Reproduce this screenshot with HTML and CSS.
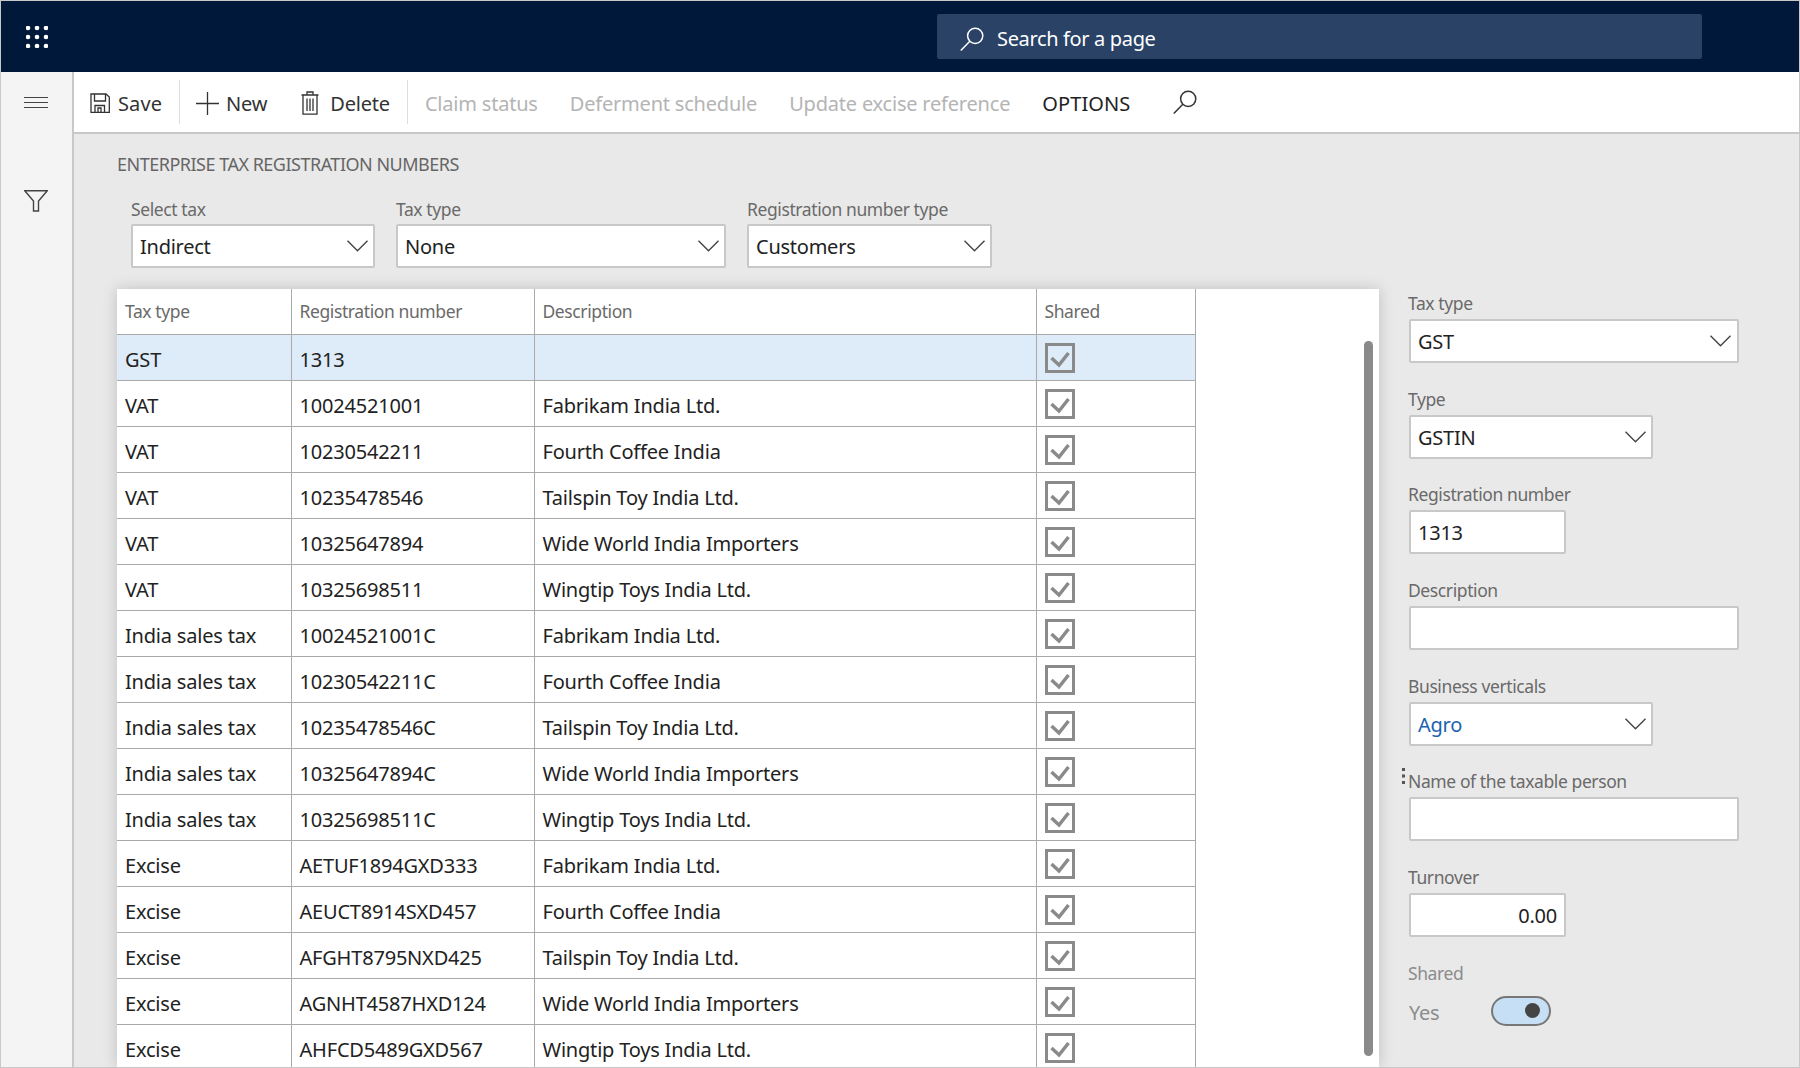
FILE: index.html
```html
<!DOCTYPE html>
<html lang="en">
<head>
  <meta charset="UTF-8" />
  <title>Enterprise tax registration numbers</title>
  <link rel="stylesheet" href="styles.css">
</head>
<body>
  <svg class="defs" width="0" height="0">
    <symbol id="chevron" viewBox="0 0 21 12">
      <path d="M0.5 0.8 L10.5 10.8 L20.5 0.8" fill="none" stroke="#444" stroke-width="1.4"/>
    </symbol>
    <symbol id="check" viewBox="0 0 30 30">
      <rect x="1.5" y="1.5" width="27" height="27" fill="none" stroke="#8a8a8a" stroke-width="3"/>
      <path d="M6.5 15 L14 22 L23.5 10" fill="none" stroke="#8a8a8a" stroke-width="3.5"/>
    </symbol>
    <symbol id="search" viewBox="0 0 24 24">
      <circle cx="15.2" cy="8.8" r="7.6" fill="none" stroke="currentColor" stroke-width="1.5"/>
      <path d="M9.8 14.2 L0.8 23.4" fill="none" stroke="currentColor" stroke-width="1.5"/>
    </symbol>
  </svg>

  <div class="app">
    <header class="topbar">
      <div class="waffle">
        <svg width="22" height="22" viewBox="0 0 22 22" fill="#fff">
          <circle cx="2" cy="2" r="2.3"/><circle cx="11" cy="2" r="2.3"/><circle cx="20" cy="2" r="2.3"/>
          <circle cx="2" cy="11" r="2.3"/><circle cx="11" cy="11" r="2.3"/><circle cx="20" cy="11" r="2.3"/>
          <circle cx="2" cy="20" r="2.3"/><circle cx="11" cy="20" r="2.3"/><circle cx="20" cy="20" r="2.3"/>
        </svg>
      </div>
      <div class="page-search">
        <svg class="page-search-icon" width="24" height="24"><use href="#search"/></svg>
        <span>Search for a page</span>
      </div>
    </header>

    <div class="body-row">
      <nav class="sidebar">
        <svg class="hamburger" width="24" height="12" viewBox="0 0 24 12" stroke="#444" stroke-width="1">
          <path d="M0 1.5 H24 M0 6.5 H24 M0 11.5 H24"/>
        </svg>
        <svg class="filter" width="24" height="22" viewBox="0 0 24 22" fill="none" stroke="#444" stroke-width="1.4">
          <path d="M0.8 0.8 H23.2 L14.5 11 V21 H9.5 V11 Z"/>
        </svg>
      </nav>

      <div class="main">
        <div class="toolbar">
          <div class="tool tool-save">
            <svg width="20" height="20" viewBox="0 0 20 20" fill="none" stroke="#333" stroke-width="1.3">
              <path d="M1 1 H16 L19.3 4 V19.3 H1 Z"/>
              <path d="M4.5 1 V8 H15.5 V1"/>
              <path d="M5 19.3 V12.5 H14.5 V19.3 M8 19 V15 H11 V19"/>
            </svg>
            <span>Save</span>
          </div>
          <div class="tool-sep"></div>
          <div class="tool tool-new">
            <svg width="23" height="23" viewBox="0 0 23 23" stroke="#333" stroke-width="1.3">
              <path d="M11.5 0 V23 M0 11.5 H23"/>
            </svg>
            <span>New</span>
          </div>
          <div class="tool tool-delete">
            <svg width="18" height="24" viewBox="0 0 18 24" fill="none" stroke="#333" stroke-width="1.3">
              <path d="M0.5 4 H17.5 M2 4 V23.2 H16 V4 M6 4 V1 H12 V4"/>
              <path d="M6 7.5 V20 M9 7.5 V20 M12 7.5 V20"/>
            </svg>
            <span>Delete</span>
          </div>
          <div class="tool-sep sep-second"></div>
          <div class="tool tool-off tool-claim"><span>Claim status</span></div>
          <div class="tool tool-off tool-defer"><span>Deferment schedule</span></div>
          <div class="tool tool-off tool-update"><span>Update excise reference</span></div>
          <div class="tool tool-options"><span>OPTIONS</span></div>
          <svg class="tool-search" width="24" height="24"><use href="#search"/></svg>
        </div>

        <div class="content">
          <section class="left">
            <h2 class="section-title">ENTERPRISE TAX REGISTRATION NUMBERS</h2>
            <div class="filters">
              <div class="filter-field w-tax">
                <label>Select tax</label>
                <div class="box"><span>Indirect</span><svg class="chev" width="21" height="12"><use href="#chevron"/></svg></div>
              </div>
              <div class="filter-field w-type">
                <label>Tax type</label>
                <div class="box"><span>None</span><svg class="chev" width="21" height="12"><use href="#chevron"/></svg></div>
              </div>
              <div class="filter-field w-reg">
                <label>Registration number type</label>
                <div class="box"><span>Customers</span><svg class="chev" width="21" height="12"><use href="#chevron"/></svg></div>
              </div>
            </div>

            <div class="grid-card">
              <table class="grid">
                <colgroup>
                  <col class="c-type"><col class="c-num"><col class="c-desc"><col class="c-shared">
                </colgroup>
                <thead>
                  <tr><th>Tax type</th><th>Registration number</th><th>Description</th><th>Shared</th></tr>
                </thead>
                <tbody>
                  <tr class="selected"><td>GST</td><td>1313</td><td></td><td><svg class="tick" width="30" height="30"><use href="#check"/></svg></td></tr>
                  <tr><td>VAT</td><td>10024521001</td><td>Fabrikam India Ltd.</td><td><svg class="tick" width="30" height="30"><use href="#check"/></svg></td></tr>
                  <tr><td>VAT</td><td>10230542211</td><td>Fourth Coffee India</td><td><svg class="tick" width="30" height="30"><use href="#check"/></svg></td></tr>
                  <tr><td>VAT</td><td>10235478546</td><td>Tailspin Toy India Ltd.</td><td><svg class="tick" width="30" height="30"><use href="#check"/></svg></td></tr>
                  <tr><td>VAT</td><td>10325647894</td><td>Wide World India Importers</td><td><svg class="tick" width="30" height="30"><use href="#check"/></svg></td></tr>
                  <tr><td>VAT</td><td>10325698511</td><td>Wingtip Toys India Ltd.</td><td><svg class="tick" width="30" height="30"><use href="#check"/></svg></td></tr>
                  <tr><td>India sales tax</td><td>10024521001C</td><td>Fabrikam India Ltd.</td><td><svg class="tick" width="30" height="30"><use href="#check"/></svg></td></tr>
                  <tr><td>India sales tax</td><td>10230542211C</td><td>Fourth Coffee India</td><td><svg class="tick" width="30" height="30"><use href="#check"/></svg></td></tr>
                  <tr><td>India sales tax</td><td>10235478546C</td><td>Tailspin Toy India Ltd.</td><td><svg class="tick" width="30" height="30"><use href="#check"/></svg></td></tr>
                  <tr><td>India sales tax</td><td>10325647894C</td><td>Wide World India Importers</td><td><svg class="tick" width="30" height="30"><use href="#check"/></svg></td></tr>
                  <tr><td>India sales tax</td><td>10325698511C</td><td>Wingtip Toys India Ltd.</td><td><svg class="tick" width="30" height="30"><use href="#check"/></svg></td></tr>
                  <tr><td>Excise</td><td>AETUF1894GXD333</td><td>Fabrikam India Ltd.</td><td><svg class="tick" width="30" height="30"><use href="#check"/></svg></td></tr>
                  <tr><td>Excise</td><td>AEUCT8914SXD457</td><td>Fourth Coffee India</td><td><svg class="tick" width="30" height="30"><use href="#check"/></svg></td></tr>
                  <tr><td>Excise</td><td>AFGHT8795NXD425</td><td>Tailspin Toy India Ltd.</td><td><svg class="tick" width="30" height="30"><use href="#check"/></svg></td></tr>
                  <tr><td>Excise</td><td>AGNHT4587HXD124</td><td>Wide World India Importers</td><td><svg class="tick" width="30" height="30"><use href="#check"/></svg></td></tr>
                  <tr><td>Excise</td><td>AHFCD5489GXD567</td><td>Wingtip Toys India Ltd.</td><td><svg class="tick" width="30" height="30"><use href="#check"/></svg></td></tr>
                </tbody>
              </table>
              <div class="scrollbar"></div>
            </div>
          </section>

          <aside class="details">
            <div class="field">
              <label>Tax type</label>
              <div class="box box-wide"><span>GST</span><svg class="chev" width="21" height="12"><use href="#chevron"/></svg></div>
            </div>
            <div class="field">
              <label>Type</label>
              <div class="box box-mid"><span>GSTIN</span><svg class="chev" width="21" height="12"><use href="#chevron"/></svg></div>
            </div>
            <div class="field">
              <label>Registration number</label>
              <div class="box box-small"><span>1313</span></div>
            </div>
            <div class="field">
              <label>Description</label>
              <div class="box box-wide"></div>
            </div>
            <div class="field">
              <label>Business verticals</label>
              <div class="box box-mid"><span class="link">Agro</span><svg class="chev" width="21" height="12"><use href="#chevron"/></svg></div>
            </div>
            <div class="field">
              <svg class="grip" width="3" height="16" viewBox="0 0 3 16" fill="#555">
                <rect y="0" width="3" height="3"/><rect y="6.5" width="3" height="3"/><rect y="13" width="3" height="3"/>
              </svg>
              <label>Name of the taxable person</label>
              <div class="box box-wide"></div>
            </div>
            <div class="field">
              <label>Turnover</label>
              <div class="box box-small box-right"><span>0.00</span></div>
            </div>
            <div class="field">
              <label class="muted">Shared</label>
              <div class="toggle-row">
                <span class="muted">Yes</span>
                <div class="toggle"><div class="knob"></div></div>
              </div>
            </div>
          </aside>
        </div>
      </div>
    </div>
  </div>
</body>
</html>
```

FILE: styles.css
```css
* {
  box-sizing: border-box;
}

body {
  margin: 0;
  background: #fff;
  font-family: "Noto Sans", "Open Sans", sans-serif;
  color: #222;
}

.defs {
  display: block;
  height: 0;
}

.app {
  width: 1800px;
  height: 1068px;
  border: 1px solid #c8c8c8;
  display: flex;
  flex-direction: column;
  overflow: hidden;
}

/* top bar */
.topbar {
  height: 71px;
  flex: none;
  background: #00183a;
  display: flex;
  align-items: center;
}

.waffle {
  width: 71px;
  display: flex;
  justify-content: center;
}

.page-search {
  width: 765px;
  height: 45px;
  margin-left: 865px;
  background: #294266;
  border-radius: 2px;
  color: #fff;
  display: flex;
  align-items: center;
  padding: 4px 0 0 23px;
  font-size: 20px;
  letter-spacing: -0.35px;
}

.page-search-icon {
  margin-right: 13px;
}

.body-row {
  flex: 1;
  display: flex;
  min-height: 0;
}

/* left rail */
.sidebar {
  width: 73px;
  flex: none;
  background: #f4f4f4;
  border-right: 2px solid #c8c8c8;
  display: flex;
  flex-direction: column;
  align-items: center;
  padding-right: 2px;
}

.hamburger {
  margin-top: 24px;
}

.filter {
  margin-top: 82px;
}

.main {
  flex: 1;
  display: flex;
  flex-direction: column;
  min-width: 0;
  background: #e9e9e9;
}

/* action pane */
.toolbar {
  height: 62px;
  flex: none;
  background: #fff;
  border-bottom: 2px solid #c8c8c8;
  display: flex;
  align-items: center;
  font-size: 20px;
  letter-spacing: -0.2px;
}

.tool {
  display: flex;
  align-items: center;
  color: #333;
}

.tool span {
  line-height: 28px;
  margin-top: 4px;
}

.tool svg {
  margin-top: 2px;
}

.tool-save {
  margin-left: 16px;
}

.tool-save span {
  margin-left: 8px;
  letter-spacing: 0.1px;
}

.tool-sep {
  width: 1px;
  height: 44px;
  background: #ddd;
  margin-left: 17px;
}

.tool-new {
  margin-left: 16px;
}

.tool-new span {
  margin-left: 7px;
}

.tool-delete {
  margin-left: 34px;
}

.tool-delete span {
  margin-left: 11px;
}

.sep-second {
  margin-left: 17px;
}

.tool-off {
  color: #b4b4b4;
}

.tool-claim {
  margin-left: 17px;
}

.tool-defer {
  margin-left: 32px;
}

.tool-update {
  margin-left: 32px;
}

.tool-options {
  margin-left: 32px;
  color: #222;
  letter-spacing: 0.1px;
}

.tool-search {
  margin-left: 43px;
  color: #333;
}

/* page body */
.content {
  flex: 1;
  display: flex;
  min-height: 0;
}

.left {
  width: 1305px;
  flex: none;
  padding-left: 43px;
  display: flex;
  flex-direction: column;
  min-height: 0;
}

.section-title {
  margin: 18px 0 0;
  font-size: 18px;
  line-height: 24px;
  font-weight: 400;
  color: #666;
  letter-spacing: -0.5px;
}

.filters {
  display: flex;
  margin-top: 21px;
  margin-left: 14px;
}

.filter-field label {
  display: block;
}

.w-tax {
  width: 244px;
  margin-right: 21px;
}

.w-type {
  width: 330px;
  margin-right: 21px;
}

.w-reg {
  width: 245px;
}

label {
  font-size: 17.5px;
  line-height: 24px;
  color: #6a6a6a;
  letter-spacing: -0.4px;
}

.box {
  height: 44px;
  margin-top: 3px;
  background: #fff;
  border: 2px solid #c8c8c8;
  border-radius: 2px;
  display: flex;
  align-items: center;
  justify-content: space-between;
  padding: 1px 5px 0 7px;
  font-size: 20px;
  letter-spacing: -0.25px;
  color: #222;
}

.chev {
  margin-top: -1px;
  flex: none;
}

/* grid */
.grid-card {
  flex: 1;
  min-height: 0;
  margin-top: 21px;
  background: #fff;
  box-shadow: 0 0 14px rgba(0, 0, 0, 0.18);
  position: relative;
  overflow: hidden;
}

.grid {
  border-collapse: collapse;
  table-layout: fixed;
  width: 1078px;
  font-size: 20px;
  letter-spacing: -0.2px;
}

.c-type {
  width: 174px;
}

.c-num {
  width: 243px;
}

.c-desc {
  width: 502px;
}

.c-shared {
  width: 159px;
}

.grid th {
  height: 45px;
  padding: 0 8px;
  text-align: left;
  font-size: 17.5px;
  font-weight: 400;
  color: #6a6a6a;
  letter-spacing: -0.4px;
  border-right: 1px solid #aaa;
  border-bottom: 1px solid #aaa;
}

.grid td {
  height: 46px;
  padding: 5px 8px 0;
  color: #222;
  border-right: 1px solid #aaa;
  border-bottom: 1px solid #aaa;
  white-space: nowrap;
}

.grid tr.selected td {
  background: #deebf8;
}

.tick {
  display: block;
  margin-top: -3px;
}

.scrollbar {
  position: absolute;
  left: 1247px;
  top: 52px;
  width: 9px;
  height: 715px;
  border-radius: 5px;
  background: #8a8a8a;
}

/* details pane */
.details {
  flex: 1;
  padding-left: 30px;
  padding-top: 157px;
}

.field {
  height: 95.67px;
  position: relative;
}

.field label {
  display: block;
  margin-left: -1px;
}

.field .box {
  margin-top: 4px;
}

.box-wide {
  width: 330px;
  padding-right: 6px;
}

.box-mid {
  width: 244px;
}

.box-small {
  width: 157px;
}

.box-right {
  justify-content: flex-end;
  padding-right: 7px;
}

.link {
  color: #1a62b0;
}

.grip {
  position: absolute;
  left: -7px;
  top: -1px;
}

.muted {
  color: #8c8c8c;
}

.toggle-row {
  display: flex;
  align-items: center;
  margin-top: 11px;
}

.toggle-row .muted {
  width: 82px;
  font-size: 20px;
  letter-spacing: -0.3px;
  margin-top: 3px;
}

.toggle {
  width: 60px;
  height: 30px;
  border: 2px solid #777;
  border-radius: 15px;
  background: #c7dff4;
  position: relative;
}

.knob {
  position: absolute;
  right: 9px;
  top: 5px;
  width: 15px;
  height: 15px;
  border-radius: 50%;
  background: #444;
}
```
